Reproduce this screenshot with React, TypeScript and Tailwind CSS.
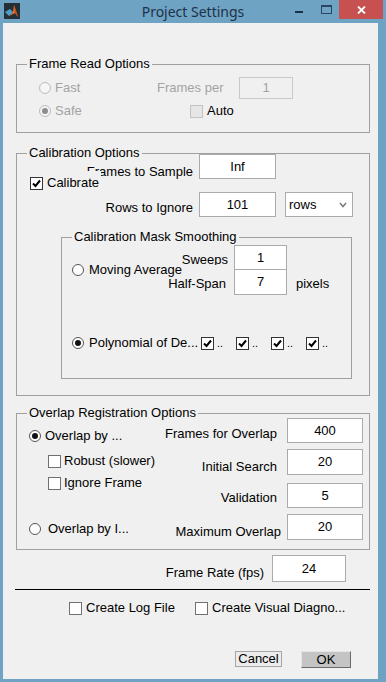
import type { ReactNode } from 'react'

function Radio({ checked = false, disabled = false }: { checked?: boolean; disabled?: boolean }) {
  return (
    <span className={`w-[12px] h-[12px] rounded-full border shrink-0 flex items-center justify-center ${disabled ? 'border-[#bdbdbd] bg-[#f5f5f5]' : 'border-[#555] bg-white'}`}>
      {checked && <span className={`w-[6px] h-[6px] rounded-full ${disabled ? 'bg-[#8e8e8e]' : 'bg-[#111]'}`} />}
    </span>
  )
}

function Check({ checked = false, disabled = false }: { checked?: boolean; disabled?: boolean }) {
  return (
    <span className={`w-[13px] h-[13px] border shrink-0 flex items-center justify-center ${disabled ? 'border-[#c2c2c2] bg-[#e6e6e6]' : checked ? 'border-[#333] bg-white' : 'border-[#707070] bg-white'}`}>
      {checked && (
        <svg width="9" height="9" viewBox="0 0 9 9">
          <path d="M1 4.5 L3.5 7 L8 1.5" stroke="#000" strokeWidth="2" fill="none" />
        </svg>
      )}
    </span>
  )
}

function Edit({ value, className = '', disabled = false }: { value: string; className?: string; disabled?: boolean }) {
  return (
    <div className={`shrink-0 border flex items-center justify-center ${disabled ? 'border-[#c9c9c9] text-[#a3a3a3]' : 'border-[#ababab] bg-white'} ${className}`}>
      {value}
    </div>
  )
}

function Group({ title, className = '', children }: { title: string; className?: string; children: ReactNode }) {
  return (
    <fieldset className={`border border-[#a0a0a0] shrink-0 ${className}`}>
      <legend className="ml-[10px] px-[2px] leading-[16px]">{title}</legend>
      {children}
    </fieldset>
  )
}

function TitleBar() {
  return (
    <div className="h-[23px] flex shrink-0">
      <div className="w-[106px] pl-[4px] pt-[3px]">
        <svg width="16" height="16" viewBox="0 0 16 16">
          <rect width="16" height="16" fill="#243038" />
          <polygon points="1,9 6,6 9,9 5,13" fill="#4a9fd0" />
          <polygon points="5,13 9,9 10,2 14,14 11,10" fill="#ea7a2c" />
          <polygon points="10,2 12,8 14,14 11,10" fill="#c64b1c" />
        </svg>
      </div>
      <div className="flex-1 text-center font-['Noto_Sans',sans-serif] text-[14px] leading-[23px] text-[#1d3148]">
        Project Settings
      </div>
      <div className="w-[106px] flex items-start">
        <span className="ml-[15px] mt-[11px] w-[8px] h-[2px] bg-[#1b2f45]" />
        <span className="ml-[18px] mt-[5px] w-[11px] h-[9px] border border-[#2a4560] border-t-2" />
        <span className="ml-[7px] w-[44px] h-[19px] bg-[#c75050] flex items-center justify-center">
          <svg width="9" height="8" viewBox="0 0 9 8">
            <path d="M1 0.5 L8 7.5 M8 0.5 L1 7.5" stroke="#fff" strokeWidth="1.8" />
          </svg>
        </span>
      </div>
    </div>
  )
}

export default function App() {
  return (
    <div className="w-[386px] h-[682px] bg-[#6fa3c3] flex flex-col overflow-hidden font-['Liberation_Sans',Arial,sans-serif] text-[13px] leading-[16px] text-black">
      <TitleBar />
      <div className="flex-1 ml-[3px] mr-[8px] mb-[3px] bg-[#f0f0f0] flex flex-col">
        {/* Frame Read Options */}
        <Group title="Frame Read Options" className="ml-[13px] w-[354px] h-[77px] mt-[33px]">
          <div className="mt-[5px] h-[22px] pl-[22px] flex items-center text-[#a3a3a3]">
            <div className="w-[118px] flex items-center gap-[4px]">
              <Radio disabled /> Fast
            </div>
            <span className="w-[82px]">Frames per</span>
            <Edit value="1" disabled className="w-[54px] h-[22px]" />
          </div>
          <div className="mt-[4px] h-[16px] pl-[22px] flex items-center">
            <div className="w-[151px] flex items-center gap-[4px] text-[#a3a3a3]">
              <Radio disabled checked /> Safe
            </div>
            <div className="flex items-center gap-[4px]">
              <Check disabled /> Auto
            </div>
          </div>
        </Group>

        {/* Calibration Options */}
        <Group title="Calibration Options" className="ml-[13px] w-[354px] h-[251px] mt-[12px]">
          <div className="mt-[-7px] h-[25px] flex items-start">
            <span className="w-[176px] mt-[10px] text-right">Frames to Sample</span>
            <Edit value="Inf" className="ml-[6px] w-[77px] h-[25px]" />
          </div>
          <div className="relative z-10 mt-[-8px] ml-[12px] w-[72px] h-[24px] bg-[#f0f0f0] flex items-center pl-[1px] gap-[4px]">
            <Check checked /> Calibrate
          </div>
          <div className="mt-[-3px] h-[25px] flex items-start">
            <span className="w-[176px] mt-[8px] text-right">Rows to Ignore</span>
            <Edit value="101" className="ml-[6px] w-[77px] h-[25px]" />
            <div className="ml-[9px] w-[68px] h-[25px] border border-[#ababab] bg-white flex items-center pl-[3px]">
              <span className="flex-1">rows</span>
              <svg width="8" height="6" viewBox="0 0 8 6" className="mr-[5px]">
                <path d="M1 1 L4 4.5 L7 1" stroke="#7a7a7a" strokeWidth="1.5" fill="none" />
              </svg>
            </div>
          </div>

          <Group title="Calibration Mask Smoothing" className="ml-[44px] w-[291px] h-[150px] mt-[12px]">
            <div className="flex items-center">
              <div className="w-[118px] pl-[10px] flex items-center gap-[5px] whitespace-nowrap">
                <Radio /> Moving Average
              </div>
              <div className="flex flex-col">
                <div className="h-[25px] flex">
                  <div className="w-[54px] flex justify-end pr-[6px] pt-[7px]">
                    <span className="block h-[12.5px] overflow-hidden leading-[15px]">Sweeps</span>
                  </div>
                  <Edit value="1" className="w-[53px] h-[25px]" />
                </div>
                <div className="mt-[-1px] h-[26px] flex items-center">
                  <div className="w-[54px] flex justify-end pr-[8px] pt-[3px] whitespace-nowrap">Half-Span</div>
                  <Edit value="7" className="w-[53px] h-[26px]" />
                  <span className="ml-[9px] pt-[3px]">pixels</span>
                </div>
              </div>
            </div>
            <div className="mt-[40px] h-[16px] pl-[10px] flex items-center">
              <Radio checked />
              <span className="ml-[5px] w-[108px] whitespace-nowrap">Polynomial of De...</span>
              <div className="ml-[4px] flex">
                {[0, 1, 2, 3].map(i => (
                  <div key={i} className="w-[35px] flex items-center">
                    <Check checked />
                    <span className="ml-[3px] text-[11px]">..</span>
                  </div>
                ))}
              </div>
            </div>
          </Group>
        </Group>

        {/* Overlap Registration Options */}
        <Group title="Overlap Registration Options" className="ml-[13px] w-[354px] h-[145px] mt-[9px]">
          <div className="flex items-start">
            <div className="w-[143px] pl-[12px] flex flex-col">
              <div className="mt-[7px] h-[16px] flex items-center gap-[4px]">
                <Radio checked /> Overlap by ...
              </div>
              <div className="mt-[9px] h-[16px] pl-[19px] flex items-center gap-[3px]">
                <Check /> Robust (slower)
              </div>
              <div className="mt-[6px] h-[16px] pl-[19px] flex items-center gap-[3px]">
                <Check /> Ignore Frame
              </div>
              <div className="mt-[30px] h-[16px] flex items-center gap-[7px]">
                <Radio /> Overlap by I...
              </div>
            </div>
            <div className="mt-[-3px] flex flex-col">
              <div className="h-[25px] flex items-start">
                <span className="w-[127px] flex justify-end pr-[10px] pt-[8px] whitespace-nowrap">Frames for Overlap</span>
                <Edit value="400" className="w-[76px] h-[25px]" />
              </div>
              <div className="mt-[6px] h-[26px] flex items-start">
                <span className="w-[127px] flex justify-end pr-[10px] pt-[10px] whitespace-nowrap">Initial Search</span>
                <Edit value="20" className="w-[76px] h-[26px]" />
              </div>
              <div className="mt-[8px] h-[25px] flex items-start">
                <span className="w-[127px] flex justify-end pr-[10px] pt-[7px] whitespace-nowrap">Validation</span>
                <Edit value="5" className="w-[76px] h-[25px]" />
              </div>
              <div className="mt-[6px] h-[26px] flex items-start">
                <span className="w-[127px] flex justify-end pr-[6px] pt-[10px] whitespace-nowrap">Maximum Overlap</span>
                <Edit value="20" className="w-[76px] h-[26px]" />
              </div>
            </div>
          </div>
        </Group>

        {/* Frame rate */}
        <div className="mt-[5px] h-[27px] flex items-start">
          <span className="w-[261px] flex justify-end pt-[10px]">Frame Rate (fps)</span>
          <Edit value="24" className="ml-[8px] w-[74px] h-[27px]" />
        </div>

        <div className="mt-[7px] ml-[12px] w-[355px] h-px bg-black" />

        <div className="mt-[10px] h-[16px] pl-[66px] flex items-center">
          <div className="w-[126px] flex items-center gap-[4px]">
            <Check /> Create Log File
          </div>
          <div className="flex items-center gap-[4px] whitespace-nowrap">
            <Check /> Create Visual Diagno...
          </div>
        </div>

        <div className="mt-[35px] pl-[232px] flex">
          <button className="w-[47px] h-[16px] border border-[#a6a6a6] bg-[#ececec] leading-[14px] text-center">Cancel</button>
          <button className="ml-[19px] w-[50px] h-[17px] bg-[#c4c4c4] border border-t-[#e4e4e4] border-l-[#e4e4e4] border-r-[#6a6a6a] border-b-[#6a6a6a] leading-[14px] text-center">OK</button>
        </div>
      </div>
    </div>
  )
}
